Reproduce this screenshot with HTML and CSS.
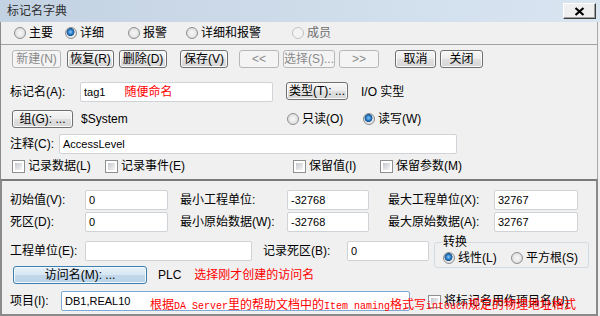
FILE: index.html
```html
<!DOCTYPE html>
<html lang="zh-CN">
<head>
<meta charset="utf-8">
<title>标记名字典</title>
<link rel="stylesheet" href="styles.css">
</head>
<body>
<div class="win">
  <div class="titlebar">
    <span class="title">标记名字典</span>
    <span class="close"><svg width="11" height="9" viewBox="0 0 11 9"><path d="M1.5 1 L9.5 8 M9.5 1 L1.5 8" stroke="#000" stroke-width="2.2"/></svg></span>
  </div>

  <div class="upper">
    <div class="tabs">
      <span class="opt t1"><span class="radio"></span>主要</span>
      <span class="opt t2"><span class="radio on"></span>详细</span>
      <span class="opt t3"><span class="radio"></span>报警</span>
      <span class="opt t4"><span class="radio"></span>详细和报警</span>
      <span class="opt dim"><span class="radio off"></span>成员</span>
    </div>
    <div class="sep"></div>
    <div class="toolbar">
      <span class="btn dis b1">新建(N)</span>
      <span class="btn b2">恢复(R)</span>
      <span class="btn b3">删除(D)</span>
      <span class="btn b4">保存(V)</span>
      <span class="btn dis b5">&lt;&lt;</span>
      <span class="btn dis b6">选择(S)...</span>
      <span class="btn dis b7">&gt;&gt;</span>
      <span class="btn b8">取消</span>
      <span class="btn b9">关闭</span>
    </div>

    <div class="row r-tag">
      <span class="lbl w70">标记名(A):</span>
      <span class="inp w193"><span class="val">tag1</span><span class="red note1">随便命名</span></span>
      <span class="btn btype">类型(T): ...</span>
      <span class="txt ml13">I/O 实型</span>
    </div>

    <div class="row r-grp">
      <span class="btn bgrp">组(G): ...</span>
      <span class="txt sys">$System</span>
      <span class="opt ro"><span class="radio"></span>只读(O)</span>
      <span class="opt"><span class="radio on"></span>读写(W)</span>
    </div>

    <div class="row r-cmt">
      <span class="lbl w49">注释(C):</span>
      <span class="inp w398"><span class="val">AccessLevel</span></span>
    </div>

    <div class="row r-chk">
      <span class="opt c1"><span class="check"></span>记录数据(L)</span>
      <span class="opt c2"><span class="check"></span>记录事件(E)</span>
      <span class="opt c3"><span class="check"></span>保留值(I)</span>
      <span class="opt"><span class="check"></span>保留参数(M)</span>
    </div>
  </div>

  <div class="lower">
    <div class="row h20">
      <span class="lbl w75">初始值(V):</span>
      <span class="inp w83"><span class="val">0</span></span>
      <span class="lbl lb2">最小工程单位:</span>
      <span class="inp w82"><span class="val">-32768</span></span>
      <span class="lbl lb3">最大工程单位(X):</span>
      <span class="inp w84"><span class="val">32767</span></span>
    </div>
    <div class="row h20 mt2">
      <span class="lbl w75">死区(D):</span>
      <span class="inp w83"><span class="val">0</span></span>
      <span class="lbl lb2">最小原始数据(W):</span>
      <span class="inp w82"><span class="val">-32768</span></span>
      <span class="lbl lb3">最大原始数据(A):</span>
      <span class="inp w84"><span class="val">32767</span></span>
    </div>
    <div class="row h20 mt9">
      <span class="lbl w75">工程单位(E):</span>
      <span class="inp w167"></span>
      <span class="lbl lbdb">记录死区(B):</span>
      <span class="inp w82"><span class="val">0</span></span>
      <div class="group">
        <span class="legend">转换</span>
        <span class="opt g1"><span class="radio on"></span>线性(L)</span>
        <span class="opt"><span class="radio"></span>平方根(S)</span>
      </div>
    </div>
    <div class="row r-acc">
      <span class="btn blue bacc">访问名(M): ...</span>
      <span class="txt ml11">PLC</span>
      <span class="red ml13">选择刚才创建的访问名</span>
    </div>
    <div class="row r-item">
      <span class="lbl w51">项目(I):</span>
      <span class="inp focus w349"><span class="val">DB1,REAL10</span></span>
      <span class="opt ml18"><span class="check"></span>将标记名用作项目名(U)</span>
      <span class="red note2">根据<span class="mono">DA Server</span>里的帮助文档中的<span class="mono">Item naming</span>格式写<span class="mono">intouch</span>规定的物理地址格式</span>
    </div>
  </div>
</div>
</body>
</html>
```
FILE: styles.css
```css
* { box-sizing: border-box; margin: 0; padding: 0; }
html, body { width: 600px; height: 316px; overflow: hidden; background: #f0f0f0; }
body {
  font-family: "Liberation Sans", "Noto Sans CJK SC", sans-serif;
  font-size: 12px;
  line-height: 14px;
  color: #000;
}
.win { width: 600px; height: 316px; }

/* title bar */
.titlebar {
  height: 22px;
  display: flex;
  align-items: center;
  justify-content: space-between;
  padding: 0 4px 0 7px;
  background: linear-gradient(to right, #c3d2e2, #d9e5f1);
}
.title { color: #2e2e2e; font-size: 12px; margin-top: -1px; }
.close {
  width: 33px; height: 16px;
  display: flex; align-items: center; justify-content: center;
  background: #efefef;
  border: 1px solid;
  border-color: #ffffff #3c3c3c #3c3c3c #ffffff;
  box-shadow: inset -1px -1px 0 #a0a0a0;
}

/* upper pane */
.upper {
  width: 598px;
  height: 157px;
  border-left: 1px solid #8a8a8a;
  border-right: 1px solid #a8a8a8;
}
.tabs {
  height: 22px;
  display: flex;
  align-items: center;
  padding-left: 13px;
}
.sep { height: 1px; background: #a0a0a0; }

.opt { display: flex; align-items: center; gap: 3px; white-space: nowrap; }
.t1 { width: 51px; }
.t2 { width: 63px; }
.t3 { width: 58px; }
.t4 { width: 106px; }
.dim { color: #6d6d6d; }

.radio {
  width: 12px; height: 12px;
  border-radius: 50%;
  border: 1px solid #8c8e90;
  background: radial-gradient(circle at 50% 50%, #f8f8f8 0, #e6e6e6 55%, #cfd1d3 100%);
  flex: none;
}
.radio.on {
  background:
    radial-gradient(circle at 45% 40%, #8cc8f5 0, #2a7bc8 30%, #134e8c 46%, transparent 52%),
    radial-gradient(circle, #f4f4f4 0, #e2e2e2 70%, #cfd1d3 100%);
}
.radio.off { border-color: #c0c2c4; background: #f3f3f3; }

.check {
  width: 13px; height: 13px;
  border: 1px solid #8e8f8f;
  padding: 2px;
  background: linear-gradient(135deg, #c4c8ce, #f6f6f6) content-box, #ffffff;
  flex: none;
}

/* buttons */
.btn {
  height: 18px;
  display: flex; align-items: center; justify-content: center;
  border: 1px solid #6f6f6f;
  border-radius: 3px;
  background: linear-gradient(#f7f7f7, #ececec 50%, #e0e0e0 51%, #d6d6d6);
  box-shadow: inset 0 0 0 1px #fbfbfb;
  white-space: nowrap;
  flex: none;
}
.btn.dis {
  color: #8a8a8a;
  border-color: #b5b8ba;
  background: #f4f4f4;
  box-shadow: none;
}
.btn.blue {
  border-color: #3c7fb1;
  background: linear-gradient(#e8f1f8, #d6e6f3 50%, #c3d9ea 51%, #b9d2e6);
  box-shadow: inset 0 0 0 1px #f2f8fc;
}
.toolbar { display: flex; margin-top: 5px; padding-left: 11px; }
.b1 { width: 49px; }
.b2 { width: 47px; margin-left: 6px; }
.b3 { width: 48px; margin-left: 5px; }
.b4 { width: 48px; margin-left: 13px; }
.b5 { width: 40px; margin-left: 11px; }
.b6 { width: 52px; margin-left: 4px; }
.b7 { width: 40px; margin-left: 4px; }
.b8 { width: 41px; margin-left: 16px; }
.b9 { width: 43px; margin-left: 4px; }

/* rows */
.row { display: flex; align-items: center; }
.h20 { height: 20px; }
.mt2 { margin-top: 2px; }
.mt9 { margin-top: 9px; }
.ml11 { margin-left: 11px; }
.ml13 { margin-left: 13px; }
.ml18 { margin-left: 18px; }

.lbl { white-space: nowrap; flex: none; }
.w49 { width: 49px; }
.w51 { width: 51px; }
.w70 { width: 70px; }
.w75 { width: 75px; }
.lb2 { width: 107px; margin-left: 12px; }
.lb3 { width: 106px; margin-left: 19px; }
.lbdb { width: 84px; margin-left: 11px; }

.inp {
  height: 20px;
  display: flex; align-items: center;
  background: #ffffff;
  border: 1px solid #cfd2d6;
  border-radius: 2px;
  padding-left: 3px;
  flex: none;
}
.inp.focus { border-color: #7fa9d6; }
.val { font-size: 11px; }
.w82 { width: 82px; }
.w83 { width: 83px; }
.w84 { width: 84px; }
.w167 { width: 167px; }
.w193 { width: 193px; }
.w349 { width: 349px; }
.w398 { width: 398px; }

.red { color: #ff0000; white-space: nowrap; }
.note1 { margin-left: 19px; }

.r-tag { height: 20px; margin-top: 14px; padding-left: 9px; }
.btype { width: 62px; margin-left: 13px; align-self: flex-start; }
.r-grp { height: 18px; margin-top: 8px; padding-left: 11px; }
.bgrp { width: 61px; }
.sys { width: 206px; margin-left: 8px; }
.ro { width: 76px; }
.r-cmt { height: 20px; margin-top: 6px; padding-left: 9px; }
.r-chk { height: 14px; margin-top: 5px; padding-left: 11px; }
.c1 { width: 93px; }
.c2 { width: 188px; }
.c3 { width: 87px; }

/* lower pane */
.lower {
  width: 598px;
  height: 137px;
  border: 2px solid #8a8a8a;
  border-top-color: #7a7a7a;
  padding: 9px 0 0 8px;
}
.group {
  position: relative;
  align-self: flex-start;
  margin-top: 1px;
  margin-left: 5px;
  width: 155px;
  height: 26px;
  border: 1px solid #d3dbe2;
  border-radius: 3px;
  display: flex;
  align-items: center;
  padding: 6px 0 0 8px;
}
.legend {
  position: absolute;
  left: 7px; top: -8px;
  padding: 0 1px;
  background: #f0f0f0;
}
.g1 { width: 68px; }

.r-acc { height: 18px; margin-top: 5px; }
.bacc { width: 134px; margin-left: 3px; }
.r-item { height: 20px; margin-top: 7px; position: relative; }
.note2 {
  position: absolute;
  left: 140px;
  top: 7px;
  font-size: 12px;
  line-height: 14px;
}
.mono { font-family: "Liberation Mono", monospace; font-size: 10px; }
```
